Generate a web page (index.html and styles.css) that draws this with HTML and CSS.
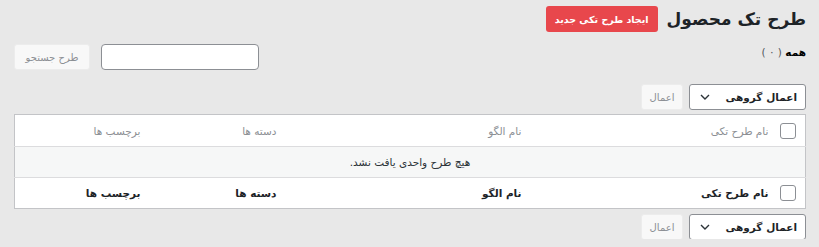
FILE: index.html
```html
<!DOCTYPE html>
<html lang="fa" dir="rtl">
<head>
<meta charset="utf-8">
<link rel="stylesheet" href="styles.css">
</head>
<body>
<div class="wrap">
  <div class="head">
    <h1 class="title">طرح تک محصول</h1>
    <a class="btn-add">ایجاد طرح تکی جدید</a>
  </div>
  <div class="row2">
    <div class="subsub"><b>همه</b> <span class="count">( ۰ )</span></div>
    <div class="search">
      <input class="search-input" type="text">
      <button class="btn-light search-btn">طرح جستجو</button>
    </div>
  </div>
  <div class="tablenav">
    <div class="select">
      <span>اعمال گروهی</span>
      <svg class="chev" width="10" height="6" viewBox="0 0 10 6"><path d="M1 1l4 4 4-4" fill="none" stroke="#2c3338" stroke-width="1.4"/></svg>
    </div>
    <button class="btn-light apply">اعمال</button>
  </div>
  <table class="list">
    <colgroup>
      <col class="c-check"><col class="c-name"><col class="c-tpl"><col class="c-cat"><col class="c-tag">
    </colgroup>
    <thead>
      <tr>
        <td class="check"><span class="box"></span></td>
        <th>نام طرح تکی</th>
        <th>نام الگو</th>
        <th>دسته ها</th>
        <th>برچسب ها</th>
      </tr>
    </thead>
    <tbody>
      <tr class="empty"><td colspan="5">هیچ طرح واحدی یافت نشد.</td></tr>
    </tbody>
    <tfoot>
      <tr>
        <td class="check"><span class="box"></span></td>
        <th>نام طرح تکی</th>
        <th>نام الگو</th>
        <th>دسته ها</th>
        <th>برچسب ها</th>
      </tr>
    </tfoot>
  </table>
  <div class="tablenav bottom">
    <div class="select">
      <span>اعمال گروهی</span>
      <svg class="chev" width="10" height="6" viewBox="0 0 10 6"><path d="M1 1l4 4 4-4" fill="none" stroke="#2c3338" stroke-width="1.4"/></svg>
    </div>
    <button class="btn-light apply">اعمال</button>
  </div>
</div>
</body>
</html>
```

FILE: styles.css
```css
html, body {
  margin: 0;
  padding: 0;
}
body {
  background: #e8e8e8;
  font-family: "DejaVu Sans", "Noto Sans", sans-serif;
  font-size: 10.5px;
  color: #1d2327;
  direction: rtl;
}
.wrap {
  padding: 5px 13px 0 14px;
}
.head {
  display: flex;
  align-items: center;
  gap: 9px;
  height: 28px;
}
.title {
  margin: 0;
  font-size: 17px;
  font-weight: 700;
  color: #1d2327;
  line-height: 28px;
}
.btn-add {
  display: flex;
  align-items: center;
  justify-content: center;
  box-sizing: border-box;
  width: 112px;
  height: 26px;
  background: #e8474c;
  color: #fff;
  border-radius: 3px;
  font-size: 9.5px;
  font-weight: 700;
  white-space: nowrap;
}
.row2 {
  display: flex;
  justify-content: space-between;
  align-items: flex-start;
  margin-top: 11px;
  height: 26px;
}
.subsub {
  font-size: 10.5px;
  margin-top: 2px;
}
.subsub b {
  font-weight: 700;
  color: #000;
}
.count {
  color: #50575e;
}
.search {
  display: flex;
  gap: 11px;
}
.search-input {
  box-sizing: border-box;
  width: 158px;
  height: 26px;
  margin: 0;
  border: 1px solid #8c8f94;
  border-radius: 4px;
  background: #fff;
}
.btn-light {
  box-sizing: border-box;
  height: 26px;
  margin: 0;
  padding: 0 6px;
  background: #f8f8f8;
  border: 1px solid #ececec;
  border-radius: 3px;
  color: #8c8f94;
  font-family: inherit;
  font-size: 10px;
  white-space: nowrap;
}
.search-btn {
  width: 76px;
}
.tablenav {
  display: flex;
  gap: 6px;
  margin-top: 14px;
  height: 25px;
}
.tablenav.bottom {
  margin-top: 5px;
}
.select {
  box-sizing: border-box;
  width: 117px;
  height: 26px;
  display: flex;
  align-items: center;
  justify-content: space-between;
  padding: 0 8px 0 10px;
  background: #fff;
  border: 1px solid #8c8f94;
  border-radius: 3px;
  font-weight: 700;
  font-size: 10.5px;
  color: #1d2327;
}
.apply {
  width: 42px;
  padding: 0;
}
.list {
  width: 100%;
  margin-top: 5px;
  border-collapse: collapse;
  table-layout: fixed;
  background: #fff;
  border: 1px solid #c3c4c7;
}
.c-check { width: 29px; }
.c-name { width: 247px; }
.c-tpl { width: 245px; }
.c-cat { width: 136px; }
.c-tag { width: auto; }
.list th, .list td {
  text-align: right;
  padding: 0 8px;
  font-size: 10.5px;
  height: 30px;
}
.list thead th, .list thead td {
  height: 31px;
}
.list thead th {
  color: #8c8f94;
  font-weight: 400;
  border-bottom: 1px solid #dcdcde;
}
.list thead td {
  border-bottom: 1px solid #dcdcde;
}
.list tfoot th {
  color: #1d2327;
  font-weight: 700;
  border-top: 1px solid #dcdcde;
}
.list tfoot td {
  border-top: 1px solid #dcdcde;
}
.list td.check {
  padding: 0 9px 0 0;
}
.box {
  display: block;
  width: 14px;
  height: 14px;
  border: 1px solid #8c8f94;
  border-radius: 3px;
  background: #fff;
}
.empty td {
  background: #f6f7f7;
  text-align: center;
  color: #2c3338;
}
```
